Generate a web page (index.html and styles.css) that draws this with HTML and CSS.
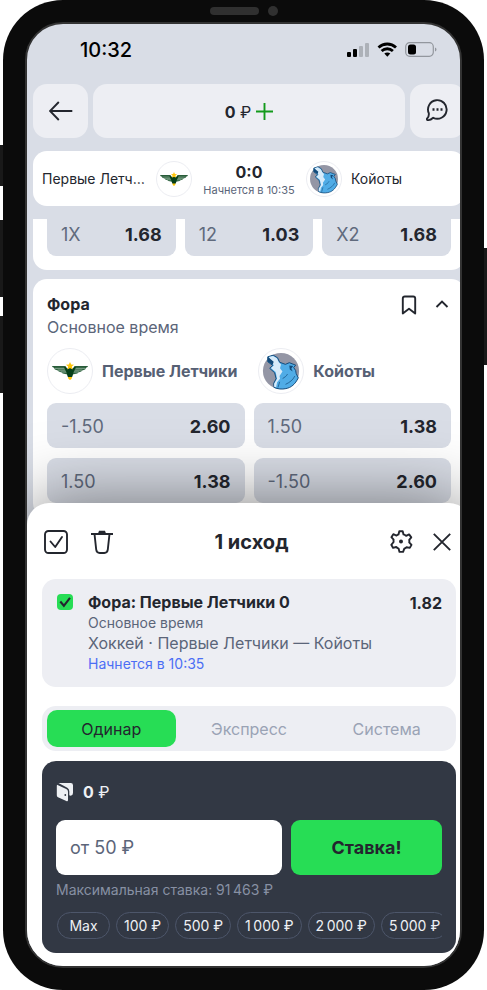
FILE: index.html
```html
<!DOCTYPE html>
<html lang="ru">
<head>
<meta charset="utf-8">
<meta name="viewport" content="width=device-width, initial-scale=1">
<title>Купон</title>
<link rel="stylesheet" href="styles.css">
</head>
<body>
<svg class="defs" aria-hidden="true">
  <symbol id="eagle" viewBox="0 0 45 45">
    <path fill="#2f6440" d="M4 18h13l3 3v5l-5-1-1-1-3-1-1-1-3-1-1-2z"/>
    <path fill="#2f6440" d="M41 18H28l-3 3v5l5-1 1-1 3-1 1-1 3-1 1-2z"/>
    <path fill="none" stroke="#b9cdbf" stroke-width=".7" d="M7 19.7h10M10 21.6h8M13 23.5h6M38 19.7H28M35 21.6h-8M32 23.5h-6"/>
    <path fill="#06401a" d="M4 17.7h14l1.5 2.3h2l1-1.5 1 1.5h2l1.500-2.300h14l-1 1H28.500L26 24l-1 4-2.500 2-2.500-2-1-4-2.500-5.300H5z"/>
    <path fill="#fdc50b" d="M22.500 13.200l1.200 2.600 2.900.3-2.200 1.900.7 2.900-2.600-1.500-2.600 1.500.7-2.900-2.200-1.900 2.900-.3zM20.300 28.600h4.400l-.7 2-1.500 1.200-1.500-1.200z"/>
  </symbol>
  <symbol id="wolf" viewBox="0 0 45 45">
    <circle cx="22.500" cy="22.500" r="18.500" fill="#9496a5"/>
    <path fill="#50ace6" stroke="#124a7a" stroke-width="1" stroke-linejoin="round" d="M9 8l5.500-1.700L19 9l2 4.500 6 2.200 4-1.700 6.500 2.500-2 2.500 2 3 .5 3 2.200 4.500C37 36 33 39.500 27.500 40.500c-4 .9-8.500.5-12-1.200l-.5-4 2.500-5-1.500-6-5-4.500 3-3L9 13z"/>
    <path fill="#d7ebfa" d="M10 8.300l4.300-1.200 4 2.400 2 4 2.200 2.300-1 4 2.500 3.200-3 4.500.5 3-3 3.500-1 5-2-.5v-3l3-5-1.500-7-4.800-4 3-2.500z"/>
    <path fill="#124a7a" d="M9 8l6 5-1 3-5-3zM31 17l4 .5-2 2.500 1.500 3-3-2z"/>
    <path fill="none" stroke="#124a7a" stroke-width=".7" stroke-linecap="round" d="M29 26c-1 2-3 3-4.500 4M36.500 28c-2 4-5 6-9 8M21 34l-1.500 5"/>
  </symbol>
</svg>
<div class="phone">
  <div class="phone-sensors"><span class="speaker"></span><span class="camera"></span></div>
  <span class="side side-mute"></span>
  <span class="side side-up"></span>
  <span class="side side-down"></span>
  <span class="side side-power"></span>

  <div class="screen">
    <div class="app">
      <div class="status">
        <span class="clock">10:32</span>
        <svg class="status-icons" width="90" height="18" viewBox="0 0 90 18">
          <rect x="0" y="11" width="4" height="5" rx="1"/>
          <rect x="6" y="8" width="4" height="8" rx="1"/>
          <rect x="12" y="5" width="4" height="11" rx="1" fill="#adb1b8"/>
          <rect x="18" y="2" width="4" height="14" rx="1" fill="#adb1b8"/>
          <g fill="none" stroke="#000" stroke-width="2.800"><path d="M31.500 6.500c5-4.700 12.500-4.700 17.500 0"/><path d="M34.600 10c3.300-3 8-3 11.300 0"/></g>
          <path d="M40.300 15.800l-3-3.200c1.700-1.500 4.300-1.500 6 0z"/>
          <rect x="58.700" y="1.700" width="27.600" height="13.600" rx="4" fill="none" stroke="#93979e" stroke-width="1.200"/>
          <rect x="61" y="3.500" width="8" height="10" rx="2.500"/>
          <path fill="#93979e" d="M88 6.500c2 .8 2 3.200 0 4z"/>
        </svg>
      </div>

      <header class="topbar">
        <button class="tile tile-icon" aria-label="Назад">
          <svg width="24" height="22" viewBox="0 0 24 22" fill="none" stroke="#23262e" stroke-width="1.900"><path d="M.8 11H23.300M9.800 2L1 11l8.800 9"/></svg>
        </button>
        <button class="tile tile-balance"><span><b>0</b> ₽</span>
          <svg width="17" height="17" viewBox="0 0 17 17" stroke="#139a1b" stroke-width="1.900"><path d="M8.500 0v17M0 8.500h17"/></svg>
        </button>
        <button class="tile tile-icon" aria-label="Чат">
          <svg width="24" height="24" viewBox="0 0 24 24" fill="none" stroke="#23262e" stroke-width="1.900" stroke-linejoin="round"><path d="M2.800 14.200A9.300 9.300 0 1 1 7.200 18.800C5.500 20.400 3.500 21.400 1.500 21c-.8-.3-.8-1.200-.2-1.700 1.200-1.200 1.700-3.300 1.500-5.100z"/><path stroke-width="2.300" d="M6.500 10.500h2M10.500 10.500h2M14.500 10.500h2"/></svg>
        </button>
      </header>

      <section class="match">
        <span class="match-name">Первые Летчики</span>
        <svg class="crest crest-small"><use href="#eagle"/></svg>
        <div class="match-score"><b>0:0</b><span>Начнется в 10:35</span></div>
        <svg class="crest crest-small"><use href="#wolf"/></svg>
        <span class="match-name">Койоты</span>
      </section>

      <main class="markets">
        <section class="card card-cut">
          <div class="odds odds-three">
            <button class="odd"><span>1X</span><b>1.68</b></button>
            <button class="odd"><span>12</span><b>1.03</b></button>
            <button class="odd"><span>X2</span><b>1.68</b></button>
          </div>
        </section>
        <section class="card">
          <div class="card-head">
            <div><h2>Фора</h2><p>Основное время</p></div>
            <button class="plain" aria-label="В закладки"><svg width="16" height="20" viewBox="0 0 16 20" fill="none" stroke="#23262e" stroke-width="1.900" stroke-linejoin="round"><path d="M1.800 18.500V3.500q0-2 2-2h8.400q2 0 2 2v15L8 13.800z"/></svg></button>
            <button class="plain" aria-label="Свернуть"><svg width="14" height="20" viewBox="0 0 14 20" fill="none" stroke="#23262e" stroke-width="1.900"><path d="M1.500 12L7 6.500l5.500 5.500"/></svg></button>
          </div>
          <div class="teams">
            <div class="team"><svg class="crest"><use href="#eagle"/></svg><b>Первые Летчики</b></div>
            <div class="team"><svg class="crest"><use href="#wolf"/></svg><b>Койоты</b></div>
          </div>
          <div class="odds odds-two">
            <button class="odd"><span>-1.50</span><b>2.60</b></button>
            <button class="odd"><span>1.50</span><b>1.38</b></button>
            <button class="odd"><span>1.50</span><b>1.38</b></button>
            <button class="odd"><span>-1.50</span><b>2.60</b></button>
          </div>
        </section>
      </main>

      <section class="sheet">
        <header class="sheet-head">
          <div class="tools">
            <button class="plain" aria-label="Выбрать все"><svg width="24" height="24" viewBox="0 0 24 24" fill="none" stroke="#23262e" stroke-width="1.900" stroke-linecap="round" stroke-linejoin="round"><rect x="1" y="1" width="22" height="22" rx="3.500"/><path d="M6.500 11.500l4.700 5.500L18 7"/></svg></button>
            <button class="plain" aria-label="Удалить"><svg width="24" height="24" viewBox="0 0 24 24" fill="none" stroke="#23262e" stroke-width="1.900"><path d="M1 4h22M4.500 4l1.700 15.500q.4 3.500 3.500 3.500h4.600q3.100 0 3.500-3.500L19.500 4"/><path fill="#23262e" stroke="none" d="M8 3.500L9 .8h6l1 2.700z"/></svg></button>
          </div>
          <h1>1 исход</h1>
          <div class="tools tools-end">
            <button class="plain" aria-label="Настройки"><svg width="24" height="24" viewBox="0 0 24 24" fill="none" stroke="#23262e" stroke-width="1.900" stroke-linejoin="round"><path d="M10.300 1.200h3.400l.8 3.200q1.600.5 2.600 1.500l3-1.500 2.200 3-2.100 2.500q.4 1.300 0 2.500l2.300 2.500-1.700 3-3.200-.7q-1.200 1-2.300 1.500l-1.200 3.200h-3.600l-.9-3.300q-1.400-.5-2.400-1.600l-3.200.9-1.700-3.100L4.600 12q-.2-1.200 0-2.300L2.400 7.200l1.900-3 3.200 1.400q1-.8 2-1.200z"/><circle cx="12" cy="11.500" r="2" fill="#23262e" stroke="none"/></svg></button>
            <button class="plain" aria-label="Закрыть"><svg width="18" height="24" viewBox="0 0 18 24" fill="none" stroke="#23262e" stroke-width="1.900"><path d="M.8 3.800l16.400 16.400M17.200 3.800L.8 20.200"/></svg></button>
          </div>
        </header>

        <article class="bet">
          <input class="tick" type="checkbox" id="bet" checked>
          <label class="bet-text" for="bet">
            <strong>Фора: Первые Летчики 0</strong>
            <small>Основное время</small>
            <span>Хоккей · Первые Летчики — Койоты</span>
            <small class="soon">Начнется в 10:35</small>
          </label>
          <b class="bet-odd">1.82</b>
        </article>

        <nav class="tabs">
          <button class="tab tab-on">Одинар</button>
          <button class="tab">Экспресс</button>
          <button class="tab">Система</button>
        </nav>

        <form class="stake">
          <div class="wallet">
            <svg width="18" height="20" viewBox="0 0 18 20"><path fill="#eef0f4" d="M1 2.700L10.200 7q1.800.8 1.800 2.800v8.200q0 1.800-1.700 1.100L2 15.300Q.8 14.700.8 13.300V4zM2.500 1h12.300Q17 1 17 3.200V11q0 2.500-2.500 2.700-1.200 0-1.200-.7V9.300q0-2.500-2-3.500z"/><circle cx="9.300" cy="13" r=".9" fill="#323844"/></svg>
            <span><b>0</b> ₽</span>
          </div>
          <div class="stake-row">
            <input class="amount" type="text" placeholder="от 50 ₽" aria-label="Сумма ставки">
            <button class="place" type="button">Ставка!</button>
          </div>
          <p class="limit">Максимальная ставка: 91&thinsp;463 ₽</p>
          <div class="chips">
            <button type="button">Max</button>
            <button type="button">100 ₽</button>
            <button type="button">500 ₽</button>
            <button type="button">1&thinsp;000 ₽</button>
            <button type="button">2&thinsp;000 ₽</button>
            <button type="button">5&thinsp;000 ₽</button>
          </div>
        </form>
      </section>
    </div>
  </div>
</div>
</body>
</html>
```
FILE: styles.css
```css
* { box-sizing: border-box; }
body, h1, h2, p { margin: 0; }
body {
  background: #fff;
  color: #23262e;
  font-family: Inter, "Liberation Sans", sans-serif;
}
button, input {
  font: inherit;
  color: inherit;
  border: 0;
  margin: 0;
  padding: 0;
}
svg { display: block; flex: none; }
.defs { position: absolute; width: 0; height: 0; }

/* Phone body */
.phone {
  position: relative;
  display: flex;
  min-height: 100vh;
  margin: 0 3px;
  padding: 22px;
  background: #0b0b0b;
  border-radius: 60px;
}
.phone-sensors {
  position: absolute;
  top: 6px;
  left: 0;
  right: 0;
  display: flex;
  justify-content: center;
  align-items: center;
  gap: 9px;
}
.speaker { width: 49px; height: 8px; border-radius: 4px; background: #303030; }
.camera { width: 10px; height: 10px; border-radius: 50%; background: #303030; }
.side { position: absolute; width: 3px; left: -3px; background: #191919; }
.side-mute { top: 145px; height: 41px; }
.side-up { top: 220px; height: 77px; }
.side-down { top: 316px; height: 77px; }
.side-power { top: 248px; height: 117px; left: auto; right: -3px; }

.screen {
  flex: 1;
  display: flex;
  min-width: 0;
  overflow: hidden;
  border: 2px solid #333;
  border-radius: 38px;
  background: #d9dde6;
}
/* The app runs slightly past the right edge of the screen */
.app {
  position: relative;
  flex: none;
  width: calc(100% + 11px);
}

.status {
  display: flex;
  justify-content: space-between;
  align-items: center;
  height: 60px;
  padding: 0 34px 8px 53px;
}
.clock { font-size: 20px; font-weight: 500; line-height: 24px; color: #000; }

.topbar { display: flex; gap: 5px; padding: 0 6px; }
.tile {
  display: flex;
  justify-content: center;
  align-items: center;
  height: 54px;
  border-radius: 14px;
  background: #edeef3;
}
.tile-icon { width: 55px; }
.tile-balance { flex: 1; gap: 5px; padding-top: 1px; font-size: 16px; }

.match {
  display: grid;
  grid-template-columns: 1fr 36px 96px 36px 1fr;
  gap: 9px;
  align-items: center;
  height: 55px;
  margin: 13px 6px;
  padding: 0 9px;
  border-radius: 14px;
  background: #fff;
}
.match-name {
  min-width: 0;
  overflow: hidden;
  white-space: nowrap;
  text-overflow: ellipsis;
  font-size: 14px;
  line-height: 20px;
}
.match-score {
  display: flex;
  flex-direction: column;
  align-items: center;
  padding-top: 2px;
  font-size: 16px;
  line-height: 20px;
}
.match-score span { font-size: 11px; line-height: 16px; color: #5b6579; }
.crest {
  width: 46px;
  height: 46px;
  border: 1px solid #ecedf2;
  border-radius: 50%;
  background: #fff;
}
.crest-small { width: 36px; height: 36px; }

.markets {
  display: flex;
  flex-direction: column;
  gap: 9px;
  padding: 0 6px;
  overflow: hidden;
}
.card { padding: 14px; border-radius: 14px; background: #fff; }
.card-cut { margin-top: -22px; }
.card-head { display: flex; gap: 18px; margin-bottom: 9px; padding-right: 2px; }
.card-head > div { flex: 1; }
.card-head h2 { font-size: 16px; line-height: 23px; font-weight: 700; }
.card-head p { font-size: 16px; line-height: 23px; color: #5b6579; }
.plain { display: flex; background: none; align-self: flex-start; }
.card-head .plain { padding-top: 2px; }
.teams { display: flex; gap: 21px; margin-bottom: 9px; color: #566074; font-size: 16px; }
.team { display: flex; align-items: center; gap: 9px; }
.odds { display: grid; gap: 9px; }
.odds-two { grid-template-columns: 1fr 1fr; gap: 10px 9px; }
.odds-three { grid-template-columns: repeat(3, 1fr); }
.odd {
  display: flex;
  justify-content: space-between;
  align-items: center;
  height: 45px;
  padding: 2px 14px 0;
  border-radius: 9px;
  background: #d9dde6;
  font-size: 18px;
}
.odd span { color: #606a7d; }

/* Bet slip */
.sheet {
  position: absolute;
  left: 0;
  right: 0;
  bottom: 0;
  padding: 27px 15px 13px;
  border-radius: 22px 22px 0 0;
  background: #fff;
  box-shadow: 0 0 70px rgba(0, 0, 0, 0.5);
}
.sheet-head {
  display: flex;
  justify-content: space-between;
  align-items: center;
  margin-bottom: 25px;
  padding: 0 5px 0 2px;
}
.sheet-head h1 { font-size: 20px; line-height: 24px; font-weight: 700; }
.tools { display: flex; gap: 22px; }
.tools-end { gap: 20px; }

.bet {
  display: flex;
  align-items: flex-start;
  margin-bottom: 19px;
  padding: 13px 14px;
  border-radius: 14px;
  background: #edeef3;
}
.tick {
  appearance: none;
  width: 16px;
  height: 16px;
  margin: 2px 15px 0 1px;
  border-radius: 4px;
  background: #27dd55 url('data:image/svg+xml,<svg xmlns="http://www.w3.org/2000/svg" viewBox="0 0 17 17" fill="none" stroke="%2323262e" stroke-width="2.200"><path d="M3.500 8l3.800 4.500L13.800 4"/></svg>');
}
.bet-text { flex: 1; display: flex; flex-direction: column; font-size: 16px; line-height: 21px; color: #5b6579; }
.bet-text strong { color: #23262e; }
.bet-text small { font-size: 14px; line-height: 20px; }
.bet-text .soon { color: #4c6ef5; }
.bet-odd { font-size: 16px; line-height: 23px; }

.tabs {
  display: grid;
  grid-template-columns: repeat(3, 1fr);
  gap: 9px;
  margin-bottom: 10px;
  padding: 4px 5px;
  border-radius: 14px;
  background: #edeef3;
}
.tab { height: 37px; border-radius: 10px; background: none; font-size: 16px; color: #9aa3b5; }
.tab-on { background: #27dd55; color: #23262e; }

.stake { padding: 20px 14px 14px; border-radius: 14px; background: #323844; color: #eef0f4; }
.wallet { display: flex; align-items: center; gap: 9px; margin-bottom: 17px; font-size: 16px; line-height: 22px; }
.stake-row { display: grid; grid-template-columns: 3fr 2fr; gap: 9px; }
.amount {
  min-width: 0;
  height: 55px;
  padding: 0 14px;
  border-radius: 9px;
  background: #fff;
  color: #23262e;
  font-size: 18px;
}
.amount::placeholder { color: #5b6579; opacity: 1; }
.place {
  border-radius: 9px;
  background: #27dd55;
  color: #23262e;
  font-size: 18px;
  font-weight: 700;
}
.limit { margin: 5px 0 12px; font-size: 14px; line-height: 20px; color: #8790a3; }
.chips { display: flex; gap: 6px; overflow: hidden; padding-left: 1px; }
.chips button {
  flex: none;
  min-width: 53px;
  height: 27px;
  padding: 0 7px;
  border: 1px solid #4d566a;
  border-radius: 14px;
  background: none;
  font-size: 14px;
}
```
